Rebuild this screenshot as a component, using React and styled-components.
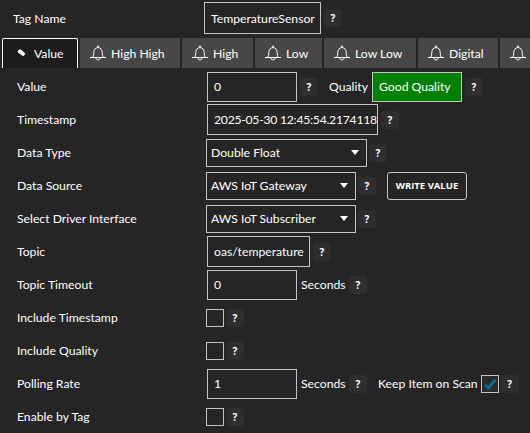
import React from "react";
import styled, { createGlobalStyle } from "styled-components";

const GlobalStyle = createGlobalStyle`
  html, body {
    margin: 0;
    background: #252525;
    overflow: hidden;
  }
  * {
    box-sizing: border-box;
  }
`;

const TABS = [
  { name: "High High", width: 100 },
  { name: "High", width: 71 },
  { name: "Low", width: 67 },
  { name: "Low Low", width: 92 },
  { name: "Digital", width: 80 },
  { name: "", width: 100 },
];

const App = () => {
  return (
    <Page>
      <GlobalStyle />
      <TagRow>
        <TagLabel>Tag Name</TagLabel>
        <TextBox $width={117} $height={32}>
          TemperatureSensor
        </TextBox>
        <Help />
      </TagRow>
      <TabBar>
        <ActiveTab>
          <TagIcon />
          Value
        </ActiveTab>
        {TABS.map((tab) => (
          <Tab key={tab.width + tab.name} $width={tab.width}>
            <BellIcon />
            {tab.name}
          </Tab>
        ))}
      </TabBar>
      <Form>
        <Row>
          <Label>Value</Label>
          <TextBox $width={90}>0</TextBox>
          <Help />
          <InlineText $left={11} $width={38}>
            Quality
          </InlineText>
          <QualityBox>Good Quality</QualityBox>
          <Help />
        </Row>
        <Row>
          <Label>Timestamp</Label>
          <TextBox $width={171} $height={31} $tight>
            2025-05-30 12:45:54.2174118
          </TextBox>
          <Help />
        </Row>
        <Row>
          <Label>Data Type</Label>
          <Select $width={161}>Double Float</Select>
          <Help />
        </Row>
        <Row>
          <Label>Data Source</Label>
          <Select $width={150}>AWS IoT Gateway</Select>
          <Help />
          <WriteButton>WRITE VALUE</WriteButton>
        </Row>
        <Row>
          <Label>Select Driver Interface</Label>
          <Select $width={150}>AWS IoT Subscriber</Select>
          <Help />
        </Row>
        <Row>
          <Label>Topic</Label>
          <TextBox $width={103} $height={31}>
            oas/temperature
          </TextBox>
          <Help />
        </Row>
        <Row>
          <Label>Topic Timeout</Label>
          <TextBox $width={90}>0</TextBox>
          <InlineText $left={4} $width={45}>
            Seconds
          </InlineText>
          <Help />
        </Row>
        <Row>
          <Label>Include Timestamp</Label>
          <CheckBox />
          <Help />
        </Row>
        <Row>
          <Label>Include Quality</Label>
          <CheckBox />
          <Help />
        </Row>
        <Row>
          <Label>Polling Rate</Label>
          <TextBox $width={90}>1</TextBox>
          <InlineText $left={4} $width={45}>
            Seconds
          </InlineText>
          <Help />
          <InlineText $left={11} $width={98}>
            Keep Item on Scan
          </InlineText>
          <CheckBox $checked $left={3}>
            <CheckMark />
          </CheckBox>
          <Help />
        </Row>
        <Row>
          <Label>Enable by Tag</Label>
          <CheckBox />
          <Help />
        </Row>
      </Form>
    </Page>
  );
};

export default App;

const Help = () => <HelpButton>?</HelpButton>;

const TagIcon = () => (
  <svg width="9" height="9" viewBox="0 0 10 10">
    <path d="M0.6 2.6 L3 0.4 L4.6 0.8 L9.4 5.4 L7 8 L1.4 4.2 Z" fill="#fff" />
  </svg>
);

const BellIcon = () => (
  <svg width="16" height="16" viewBox="0 0 16 16" fill="none" stroke="#fff" strokeWidth="1">
    <path d="M2.8 12.5 C3.6 11.2 3.8 9.6 3.8 7.4 C3.8 4.6 5.6 2.6 8 2.6 C10.4 2.6 12.2 4.6 12.2 7.4 C12.2 9.6 12.4 11.2 13.2 12.5" />
    <path d="M0 12.5 H16" />
    <path d="M5.7 12.7 C5.8 15.6 10.2 15.6 10.3 12.7" />
    <path d="M8 0.6 V2.6" strokeWidth="1.4" />
  </svg>
);

const CheckMark = () => (
  <svg width="14" height="14" viewBox="0 0 14 14">
    <path d="M2 7.6 L5.4 11 L12.4 2.6" fill="none" stroke="#0f6ea6" strokeWidth="2.6" />
  </svg>
);

const Page = styled.div`
  width: 530px;
  height: 433px;
  overflow: hidden;
  background: #252525;
  color: #fff;
  font-family: "Lato", "Open Sans", sans-serif;
  font-size: 12.2px;
`;

const TagRow = styled.div`
  display: flex;
  align-items: center;
  height: 32px;
  margin-top: 2px;
  padding-left: 13px;
`;

const TagLabel = styled.div`
  width: 190px;
`;

const TabBar = styled.div`
  display: flex;
  gap: 2px;
  height: 30px;
  margin-top: 4px;
  padding-left: 2px;
  overflow: hidden;
`;

const Tab = styled.div`
  flex: 0 0 ${(p) => p.$width}px;
  display: flex;
  align-items: center;
  gap: 5px;
  padding-left: 10px;
  background: #474747;
`;

const ActiveTab = styled(Tab).attrs({ $width: 76 })`
  gap: 8px;
  padding-left: 14px;
  background: #1c1c1c;
  border: 1px solid #fff;
  border-bottom: none;
  border-radius: 2px 2px 0 0;
`;

const Form = styled.div`
  display: flex;
  flex-direction: column;
  padding-top: 2px;
`;

const Row = styled.div`
  display: flex;
  align-items: center;
  height: 33px;
  padding-left: 17px;
`;

const Label = styled.div`
  flex: 0 0 189px;
`;

const TextBox = styled.div`
  flex: 0 0 ${(p) => p.$width}px;
  display: flex;
  align-items: center;
  height: ${(p) => p.$height || 30}px;
  margin-left: 1px;
  padding-left: 6px;
  border: 1px solid #c4c4c4;
  white-space: nowrap;
  overflow: hidden;
  letter-spacing: ${(p) => (p.$tight ? "-0.25px" : "normal")};
`;

const Select = styled.div`
  flex: 0 0 ${(p) => p.$width}px;
  display: flex;
  align-items: center;
  position: relative;
  height: 28px;
  margin-right: -1px;
  padding-left: 4px;
  border: 1px solid #c4c4c4;

  &::after {
    content: "";
    position: absolute;
    right: 7px;
    top: 10px;
    border-left: 4px solid transparent;
    border-right: 4px solid transparent;
    border-top: 5px solid #fff;
  }
`;

const HelpButton = styled.div`
  flex: 0 0 18px;
  display: flex;
  align-items: center;
  justify-content: center;
  height: 18px;
  margin-left: 3px;
  border-radius: 3px;
  background: #2e2e2e;
  font-family: "Open Sans", sans-serif;
  font-size: 10px;
  font-weight: 700;
`;

const InlineText = styled.div`
  flex: 0 0 ${(p) => p.$width}px;
  margin-left: ${(p) => p.$left}px;
  white-space: nowrap;
`;

const QualityBox = styled.div`
  flex: 0 0 90px;
  display: flex;
  align-items: center;
  height: 30px;
  margin-left: 4px;
  padding-left: 6px;
  background: #008000;
  border: 1px solid #c4c4c4;
`;

const CheckBox = styled.div`
  flex: 0 0 18px;
  display: flex;
  align-items: center;
  justify-content: center;
  height: 18px;
  margin-left: ${(p) => p.$left || 0}px;
  margin-right: -1px;
  border: 1px solid #c4c4c4;
  background: ${(p) => (p.$checked ? "#2b2b2b" : "transparent")};
`;

const WriteButton = styled.div`
  flex: 0 0 80px;
  display: flex;
  align-items: center;
  justify-content: center;
  height: 28px;
  margin-left: 11px;
  border: 1px solid #c4c4c4;
  border-radius: 3px;
  font-family: "Open Sans", sans-serif;
  font-size: 9.5px;
  font-weight: 700;
`;
